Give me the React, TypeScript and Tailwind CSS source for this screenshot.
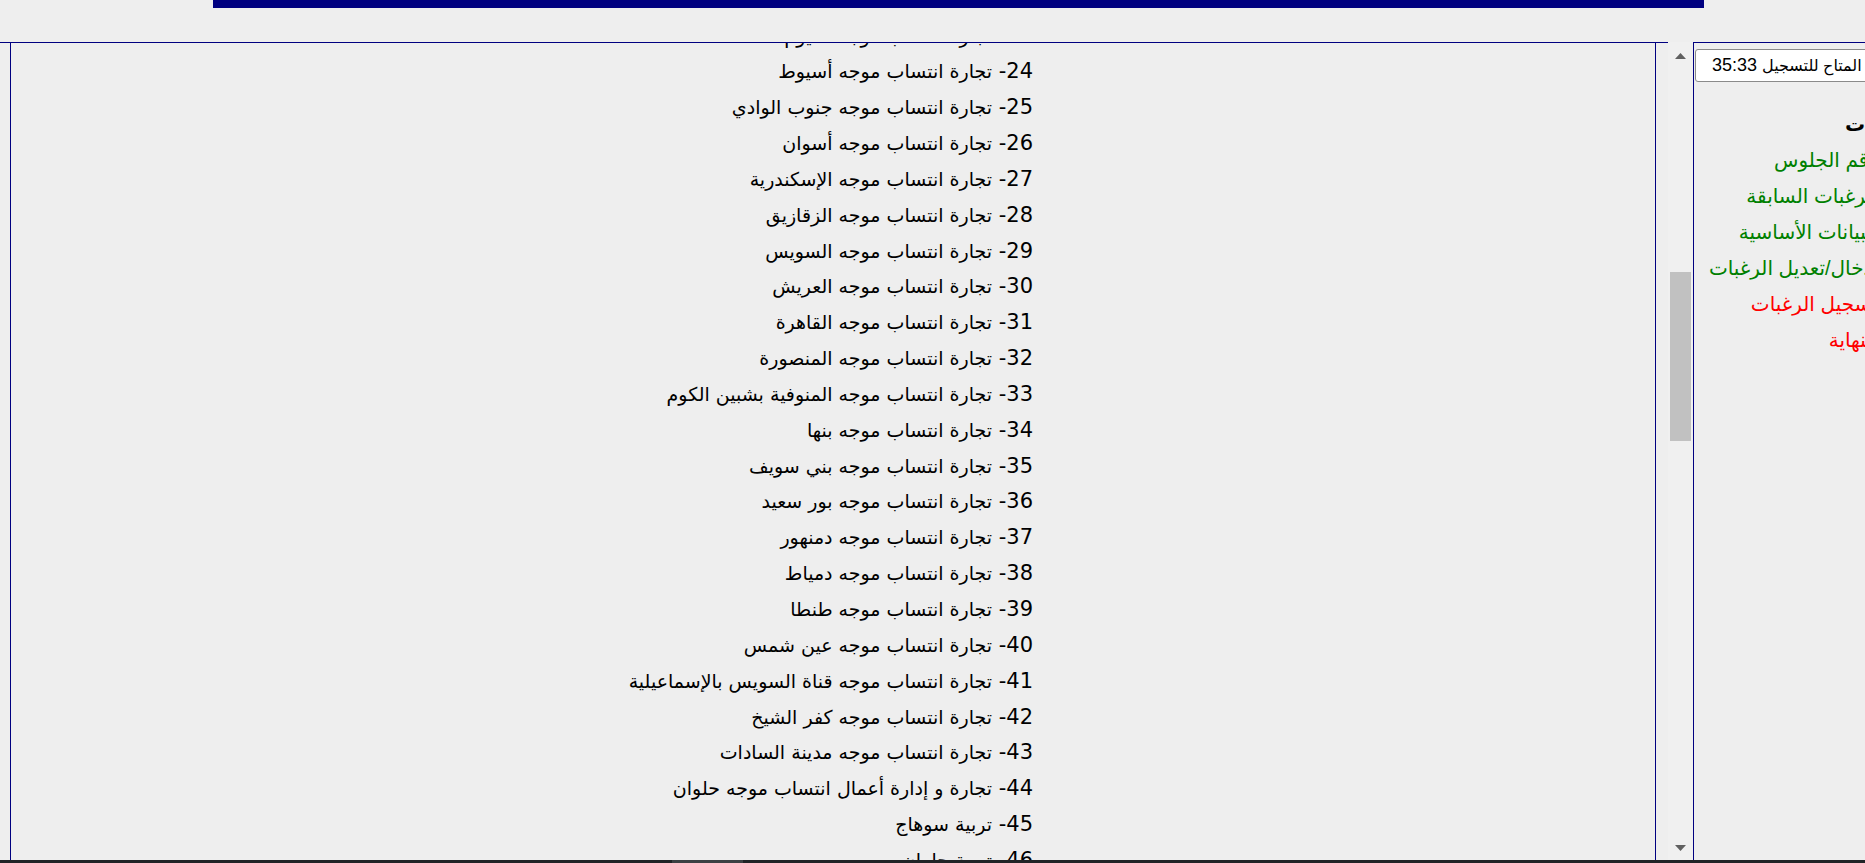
/**
 * Registration frames: top banner, scrolled faculty list, and side step menu.
 */

const FACULTIES: { n: number; name: string }[] = [
  { n: 23, name: "تجارة انتساب موجه الفيوم" },
  { n: 24, name: "تجارة انتساب موجه أسيوط" },
  { n: 25, name: "تجارة انتساب موجه جنوب الوادي" },
  { n: 26, name: "تجارة انتساب موجه أسوان" },
  { n: 27, name: "تجارة انتساب موجه الإسكندرية" },
  { n: 28, name: "تجارة انتساب موجه الزقازيق" },
  { n: 29, name: "تجارة انتساب موجه السويس" },
  { n: 30, name: "تجارة انتساب موجه العريش" },
  { n: 31, name: "تجارة انتساب موجه القاهرة" },
  { n: 32, name: "تجارة انتساب موجه المنصورة" },
  { n: 33, name: "تجارة انتساب موجه المنوفية بشبين الكوم" },
  { n: 34, name: "تجارة انتساب موجه بنها" },
  { n: 35, name: "تجارة انتساب موجه بني سويف" },
  { n: 36, name: "تجارة انتساب موجه بور سعيد" },
  { n: 37, name: "تجارة انتساب موجه دمنهور" },
  { n: 38, name: "تجارة انتساب موجه دمياط" },
  { n: 39, name: "تجارة انتساب موجه طنطا" },
  { n: 40, name: "تجارة انتساب موجه عين شمس" },
  { n: 41, name: "تجارة انتساب موجه قناة السويس بالإسماعيلية" },
  { n: 42, name: "تجارة انتساب موجه كفر الشيخ" },
  { n: 43, name: "تجارة انتساب موجه مدينة السادات" },
  { n: 44, name: "تجارة و إدارة أعمال انتساب موجه حلوان" },
  { n: 45, name: "تربية سوهاج" },
  { n: 46, name: "تربية حلوان" },
];

const STEPS: { label: string; done: boolean }[] = [
  { label: "رقم الجلوس", done: true },
  { label: "الرغبات السابقة", done: true },
  { label: "البيانات الأساسية", done: true },
  { label: "إدخال/تعديل الرغبات", done: true },
  { label: "تسجيل الرغبات", done: false },
  { label: "النهاية", done: false },
];

function Scrollbar() {
  return (
    <div className="w-[25px] shrink-0 bg-[#f0f0f0] flex flex-col">
      <div className="h-[28px] flex items-center justify-center">
        <svg width="11" height="6" viewBox="0 0 11 6">
          <polygon points="0,6 11,6 5.5,0" fill="#606060" />
        </svg>
      </div>
      <div className="h-[202px]" />
      <div className="mx-[2px] h-[169px] bg-[#c1c1c1]" />
      <div className="flex-1" />
      <div className="h-[25px] flex items-center justify-center">
        <svg width="11" height="6" viewBox="0 0 11 6">
          <polygon points="0,0 11,0 5.5,6" fill="#606060" />
        </svg>
      </div>
    </div>
  );
}

export default function App() {
  return (
    <div className="w-[1865px] h-[863px] bg-[#eeeeee] overflow-hidden flex flex-col">
      {/* Top frame */}
      <div className="h-[42px] shrink-0 pl-[213px]">
        <div className="w-[1491px] h-[8px] bg-[#000080]" />
      </div>

      <div className="flex h-[818px]">
        {/* Main frame */}
        <div className="w-[1668px] border-t border-[#000080] overflow-hidden">
          <div className="ml-[10px] w-[1646px] h-full border-x border-[#000080] overflow-hidden">
            <div
              className="-mt-[24.5px] w-[1022px] text-right text-black"
              style={{ fontFamily: '"DejaVu Sans", Tahoma, sans-serif' }}
            >
              {FACULTIES.map((f) => (
                <div
                  key={f.n}
                  dir="rtl"
                  className="h-[35.85px] leading-[35.85px] text-[21px] whitespace-nowrap"
                >
                  <span>{f.n}-</span>{" "}
                  <span className="text-[19px]">{f.name}</span>
                </div>
              ))}
            </div>
          </div>
        </div>

        <Scrollbar />

        {/* Side frame */}
        <div
          className="flex-1 border-l border-t border-[#000080] overflow-hidden"
          style={{ fontFamily: '"Liberation Sans", "DejaVu Sans", Arial, sans-serif' }}
        >
          <div className="ml-[1px] mt-[6px] w-[300px] h-[33px] shrink-0 bg-white border border-[#8a8a8a] rounded-[3px] flex items-center pl-[16px] text-[18px] text-black">
            <span dir="rtl" className="whitespace-nowrap">
              <span className="text-[16px]">الوقت المتاح للتسجيل</span> 35:33
            </span>
          </div>

          <div className="mt-[24px] w-[300px] text-[20px] leading-[36px]">
            <div dir="rtl" className="w-[300px] text-left font-bold text-black pl-[151px] whitespace-nowrap">
              <span dir="rtl">الخطوات</span>
            </div>
            {STEPS.map((s) => (
              <div
                key={s.label}
                dir="rtl"
                className={
                  "w-[184px] text-right whitespace-nowrap " +
                  (s.done ? "text-[#008000]" : "text-[#ff0000]")
                }
              >
                {s.label}
              </div>
            ))}
          </div>
        </div>
      </div>

      {/* Bottom edge */}
      <div className="h-[3px] shrink-0 bg-[#202326] flex">
        <div className="ml-[672px] w-[71px] bg-[#3c4043]" />
      </div>
    </div>
  );
}
